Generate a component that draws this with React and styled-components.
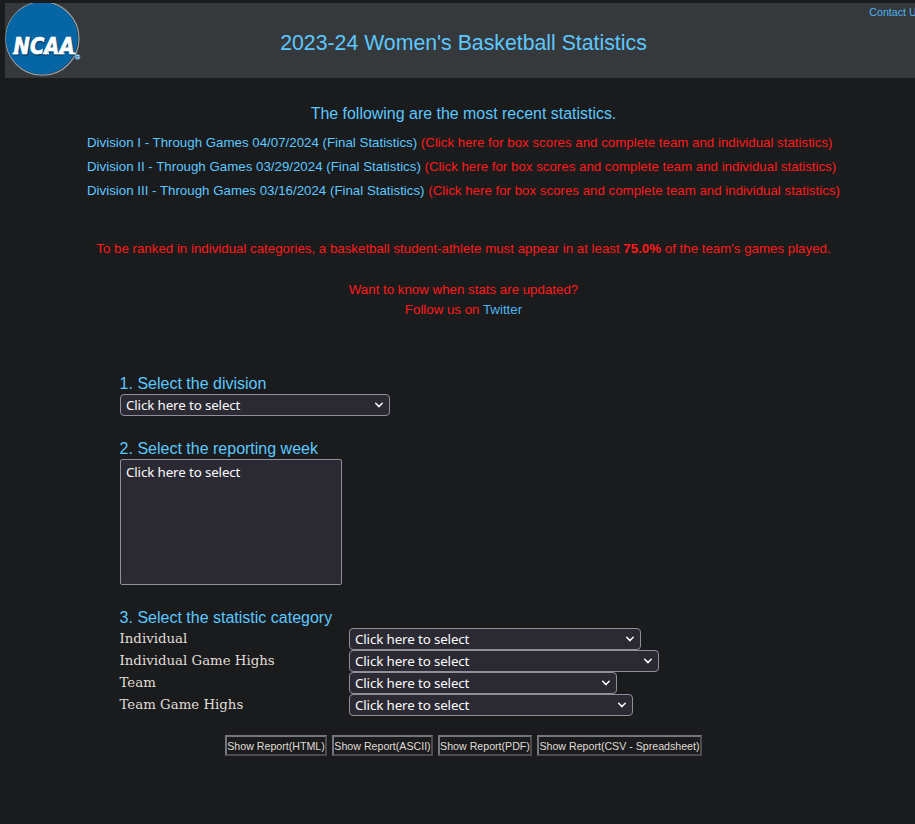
import React from 'react';
import styled, { createGlobalStyle } from 'styled-components';

const GlobalStyle = createGlobalStyle`
  html, body { margin: 0; background: #191b1c; overflow: hidden; }
  body { font-family: "Liberation Sans", Arial, sans-serif; font-size: 13.33px; }
`;

const Page = styled.div`
  width: 917px;
  height: 821px;
  padding: 3px 0 0 5px;
`;

const Header = styled.header`
  display: grid;
  grid-template-columns: 75px 1fr 75px;
  height: 75px;
  background: #36393b;
`;

const Title = styled.h1`
  margin: 0;
  font-size: 21.28px;
  font-weight: 400;
  line-height: 80px;
  text-align: center;
  color: #5cc8ff;
`;

const Contact = styled.a`
  padding-top: 3px;
  font-size: 10.67px;
  line-height: 13px;
  text-align: right;
  white-space: nowrap;
  color: #4db4f5;
`;

const Intro = styled.h2`
  margin: 25px 0 6px;
  font-size: 15.95px;
  font-weight: 400;
  line-height: 22px;
  text-align: center;
  color: #5cc8ff;
`;

const Divisions = styled.div`
  display: flex;
  flex-direction: column;
  width: 753px;
  margin: 0 auto;
`;

const Division = styled.div`
  font-size: 13.31px;
  line-height: 24px;
  white-space: nowrap;
  color: #ff1a1a;
`;

const Link = styled.a`
  color: ${(p) => (p.$soft ? '#4db4f5' : '#5cc8ff')};
`;

const Note = styled.p`
  margin: ${(p) => p.$top}px 0 0;
  font-size: 13.3px;
  line-height: 20px;
  text-align: center;
  color: #ff1a1a;
`;

const Form = styled.form`
  display: flex;
  flex-direction: column;
  align-items: flex-start;
  padding: 54px 0 0 115px;
`;

const StepTitle = styled.h3`
  margin: ${(p) => p.$top || 0}px 0 0 -0.4px;
  font-size: 16px;
  font-weight: 400;
  line-height: 20px;
  height: 20px;
  color: #5cc8ff;
`;

const Control = styled.div`
  box-sizing: border-box;
  display: flex;
  justify-content: space-between;
  align-items: center;
  width: ${(p) => p.$width}px;
  height: 22px;
  padding: 0 6px 0 5px;
  border: 1px solid #8f8f9d;
  border-radius: 4px;
  background: #2b2a33;
  color: #fbfbfe;
  font: 13.33px/20px "Noto Sans", sans-serif;
  letter-spacing: -0.12px;
`;

const ListBox = styled(Control)`
  align-items: flex-start;
  height: 126px;
  padding-top: 2px;
  border-radius: 2px;
`;

const Category = styled.div`
  display: grid;
  grid-template-columns: 229px auto;
`;

const Label = styled.label`
  margin-left: -0.5px;
  font-family: "DejaVu Serif", serif;
  line-height: 22px;
  color: #e0ddd8;
`;

const Buttons = styled.div`
  display: flex;
  justify-content: center;
  gap: 5px;
  margin-top: 19px;
`;

const Button = styled.button`
  box-sizing: border-box;
  width: ${(p) => p.$width}px;
  height: 21px;
  padding: 1px 0 0;
  border: 2px solid;
  border-color: #78767d #4d4b52 #4d4b52 #78767d;
  background: #191b1c;
  color: #e0ddd8;
  font: 10.64px/16px "Liberation Sans", Arial, sans-serif;
  white-space: nowrap;
`;

function Logo() {
  return (
    <svg width="76" height="75" viewBox="0 0 76 75">
      <circle cx="37.6" cy="36" r="36.6" fill="#1d3445" />
      <circle cx="37.4" cy="35.6" r="36.6" fill="none" stroke="#a0a4a7" strokeWidth="1.2" />
      <circle cx="36.8" cy="35.3" r="36" fill="#0565a5" />
      <g fontFamily="DejaVu Sans" fontWeight="700" fontStyle="italic" fontSize="17" strokeLinejoin="miter">
        <text transform="translate(9.4 51.8) scale(1 1.3)" textLength="61" lengthAdjust="spacingAndGlyphs" fill="#064674" stroke="#064674" strokeWidth="1.2">NCAA</text>
        <text transform="translate(8.6 50.8) scale(1 1.3)" textLength="61" lengthAdjust="spacingAndGlyphs" fill="#fff" stroke="#fff" strokeWidth=".5">NCAA</text>
        <path d="M7.5 50.4h6M11.5 35.4h4M40 50.4h4M55.5 50.4h4M67.5 50.4h3" stroke="#fff" strokeWidth="1.6" />
      </g>
      <circle cx="72.5" cy="54" r="2.4" fill="#0868ac" stroke="#7fb4d8" strokeWidth=".8" />
      <text x="71" y="55.8" fontFamily="Liberation Sans" fontSize="4.5" fill="#fff">R</text>
    </svg>
  );
}

function Select({ width }) {
  return (
    <Control $width={width}>
      Click here to select
      <svg width="9" height="6" viewBox="0 0 9 6" fill="none" stroke="#fbfbfe" strokeWidth="1.5" strokeLinecap="round" strokeLinejoin="round">
        <path d="M1.7 1.3L5 4.6L8.2 1.3" />
      </svg>
    </Control>
  );
}

const divisions = [
  ['I', '04/07/2024'],
  ['II', '03/29/2024'],
  ['III', '03/16/2024'],
];
const categories = [
  ['Individual', 292],
  ['Individual Game Highs', 310],
  ['Team', 268],
  ['Team Game Highs', 284],
];
const reports = [
  ['HTML', 102],
  ['ASCII', 101],
  ['PDF', 94],
  ['CSV - Spreadsheet', 165],
];

export default function App() {
  return (
    <>
      <GlobalStyle />
      <Page>
        <Header>
          <Logo />
          <Title>2023-24 Women's Basketball Statistics</Title>
          <Contact>Contact Us</Contact>
        </Header>
        <Intro>The following are the most recent statistics.</Intro>
        <Divisions>
          {divisions.map(([name, date]) => (
            <Division key={name}>
              <Link>Division {name} - Through Games {date} (Final Statistics)</Link>{' '}
              (Click here for box scores and complete team and individual statistics)
            </Division>
          ))}
        </Divisions>
        <Note $top={36}>
          To be ranked in individual categories, a basketball student-athlete must appear in at least <b>75.0%</b> of the team's games played.
        </Note>
        <Note $top={21}>
          Want to know when stats are updated?
          <br />
          Follow us on <Link $soft>Twitter</Link>
        </Note>
        <Form>
          <StepTitle>1. Select the division</StepTitle>
          <Select width={270} />
          <StepTitle $top={23}>2. Select the reporting week</StepTitle>
          <ListBox $width={222}>Click here to select</ListBox>
          <StepTitle $top={23}>3. Select the statistic category</StepTitle>
          {categories.map(([name, width]) => (
            <Category key={name}>
              <Label>{name}</Label>
              <Select width={width} />
            </Category>
          ))}
        </Form>
        <Buttons>
          {reports.map(([name, width]) => (
            <Button key={name} $width={width}>Show Report({name})</Button>
          ))}
        </Buttons>
      </Page>
    </>
  );
}
